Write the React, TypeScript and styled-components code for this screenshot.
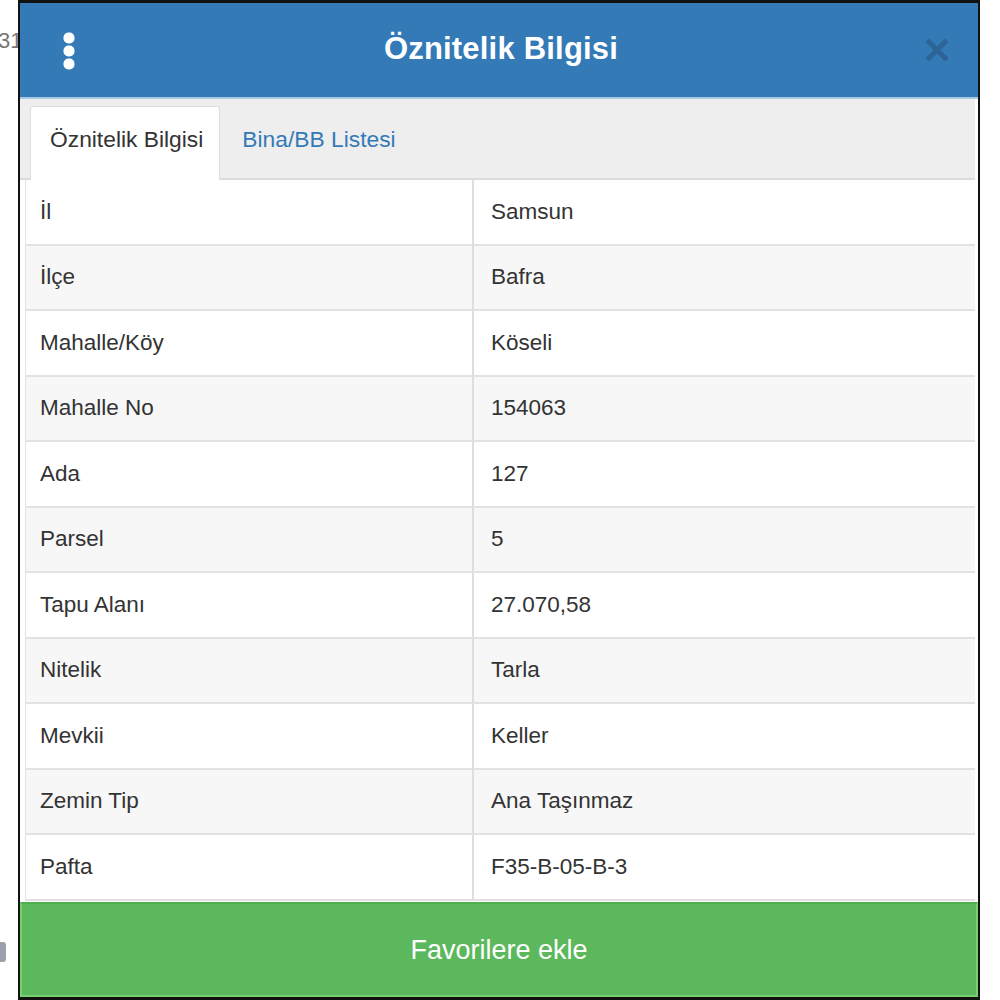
import React from "react";
import styled, { createGlobalStyle } from "styled-components";

const GlobalStyle = createGlobalStyle`
  html, body {
    margin: 0;
    padding: 0;
    background: #ffffff;
    font-family: "Liberation Sans", Arial, sans-serif;
  }
`;

const rows: [string, string][] = [
  ["İl", "Samsun"],
  ["İlçe", "Bafra"],
  ["Mahalle/Köy", "Köseli"],
  ["Mahalle No", "154063"],
  ["Ada", "127"],
  ["Parsel", "5"],
  ["Tapu Alanı", "27.070,58"],
  ["Nitelik", "Tarla"],
  ["Mevkii", "Keller"],
  ["Zemin Tip", "Ana Taşınmaz"],
  ["Pafta", "F35-B-05-B-3"],
];

function App() {
  return (
    <>
      <GlobalStyle />
      <Page>
        <PageText>31</PageText>
        <PageStub />
      </Page>
      <Modal>
        <Header>
          <MenuButton aria-label="menu">
            <svg width="12" height="38" viewBox="0 0 12 38">
              <rect x="0.5" y="0.5" width="11" height="11" rx="5" fill="#fff" />
              <rect x="0.5" y="13.5" width="11" height="11" rx="5" fill="#fff" />
              <rect x="0.5" y="26.5" width="11" height="11" rx="5" fill="#fff" />
            </svg>
          </MenuButton>
          <Title>Öznitelik Bilgisi</Title>
          <CloseButton aria-label="close">
            <svg width="22" height="22" viewBox="0 0 22 22">
              <path
                d="M3 3 L19 19 M19 3 L3 19"
                stroke="#2d6498"
                strokeWidth="5"
                strokeLinecap="square"
              />
            </svg>
          </CloseButton>
        </Header>
        <Tabs>
          <Tab active>Öznitelik Bilgisi</Tab>
          <Tab>Bina/BB Listesi</Tab>
        </Tabs>
        <Table>
          {rows.map(([label, value], i) => (
            <Row key={label} striped={i % 2 === 1}>
              <Cell>{label}</Cell>
              <Cell divider>{value}</Cell>
            </Row>
          ))}
        </Table>
        <FavButton>Favorilere ekle</FavButton>
      </Modal>
    </>
  );
}

const Page = styled.div`
  height: 1000px;
  display: flex;
  flex-direction: column;
  justify-content: space-between;
  padding: 28px 0 38px;
  box-sizing: border-box;
`;

const PageText = styled.div`
  font-size: 22px;
  color: #777;
  margin-left: -2px;
`;

const PageStub = styled.div`
  width: 6px;
  height: 20px;
  background: #9aa3ad;
  border-radius: 0 3px 3px 0;
`;

const Modal = styled.div`
  position: absolute;
  top: 0;
  left: 18px;
  width: 962px;
  height: 1000px;
  box-sizing: border-box;
  border: 2px solid #111;
  border-top-width: 3px;
  border-bottom-width: 3px;
  background: #fff;
  display: flex;
  flex-direction: column;
`;

const Header = styled.div`
  height: 94px;
  flex-shrink: 0;
  background: #337ab7;
  border-bottom: 2px solid #a6c9e6;
  display: flex;
  align-items: center;
  padding: 0 28px 0 42px;
`;

const MenuButton = styled.div`
  width: 14px;
  display: flex;
  align-items: center;
  justify-content: center;
  margin-top: 2px;
`;

const Title = styled.h1`
  flex: 1;
  margin: 0;
  text-align: center;
  color: #fff;
  font-size: 31px;
  font-weight: bold;
  letter-spacing: 0.2px;
  margin-top: -2px;
`;

const CloseButton = styled.div`
  width: 22px;
  height: 22px;
  margin-right: 2px;
  display: flex;
`;

const Tabs = styled.div`
  height: 81px;
  flex-shrink: 0;
  box-sizing: border-box;
  background: #eeeeee;
  margin-right: 3px;
  padding: 7px 0 0 10px;
  display: flex;
  align-items: flex-end;
  border-bottom: 2px solid #dcdcdc;
`;

const Tab = styled.div<{ active?: boolean }>`
  height: 74px;
  box-sizing: border-box;
  padding: 0 16px 8px ${(p) => (p.active ? "19px" : "21px")};
  display: flex;
  align-items: center;
  font-size: 22.8px;
  color: ${(p) => (p.active ? "#333" : "#337ab7")};
  background: ${(p) => (p.active ? "#fff" : "transparent")};
  border: 1px solid ${(p) => (p.active ? "#dddddd" : "transparent")};
  border-bottom: none;
  border-radius: 3px 3px 0 0;
  margin-bottom: -2px;
`;

const Table = styled.div`
  margin: 0 3px 0 5px;
  display: grid;
  grid-template-columns: 446px 1fr;
  grid-auto-rows: 65.5px;
  border-left: 1px solid #e4e4e4;
`;

const Row = styled.div<{ striped?: boolean }>`
  display: contents;
  & > div {
    background: ${(p) => (p.striped ? "#f7f7f7" : "#fff")};
  }
`;

const Cell = styled.div<{ divider?: boolean }>`
  display: flex;
  align-items: center;
  padding: 0 0 0 ${(p) => (p.divider ? "17px" : "14px")};
  font-size: 22.5px;
  color: #333;
  border-bottom: 2px solid #e2e2e2;
  border-left: ${(p) => (p.divider ? "2px solid #dedede" : "none")};
  box-sizing: border-box;
`;

const FavButton = styled.div`
  margin-top: auto;
  height: 95px;
  box-sizing: border-box;
  background: #5cb85c;
  border: 2px solid #78d070;
  border-top-color: #4cae4c;
  display: flex;
  align-items: center;
  justify-content: center;
  color: #fff;
  font-size: 27px;
  padding-top: 2px;
`;

export default App;
